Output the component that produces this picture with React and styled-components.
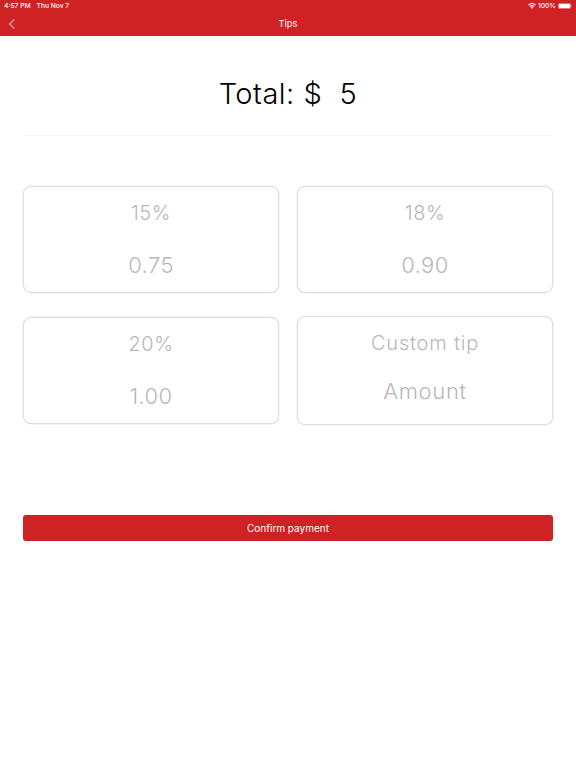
import React, { useState } from "react";
import styled, { createGlobalStyle } from "styled-components";

const GlobalStyle = createGlobalStyle`
    * {
        box-sizing: border-box;
    }

    body {
        margin: 0;
        background: #fff;
        font-family: Inter, "Liberation Sans", sans-serif;
    }
`;

const Header = styled.header`
    height: 36px;
    color: #fff;
    background: #cf2224;
`;

const StatusBar = styled.div`
    display: flex;
    align-items: center;
    justify-content: space-between;
    height: 12px;
    padding: 0 4px;
    font-size: 6.7px;
    font-weight: 500;
    line-height: 12px;
    white-space: pre;
`;

const StatusGroup = styled.div`
    display: flex;
    align-items: center;
    gap: ${props => props.$gap}px;
`;

const NavBar = styled.div`
    display: grid;
    grid-template-columns: 24px 1fr 24px;
    align-items: center;
    height: 24px;
`;

const BackButton = styled.button`
    display: flex;
    padding: 0 0 0 8px;
    border: 0;
    color: inherit;
    background: none;
`;

const Title = styled.h1`
    margin: 0;
    font-size: 9.4px;
    font-weight: 400;
    line-height: 24px;
    text-align: center;
`;

const Content = styled.main`
    padding: 0 23px;
`;

const Total = styled.div`
    height: 100px;
    padding-top: 38px;
    border-bottom: 1px solid #f3f3f3;
    color: #000;
    font-size: 29px;
    font-weight: 300;
    line-height: 40px;
    letter-spacing: 0.5px;
    text-align: center;
    white-space: pre;
`;

const TipGrid = styled.div`
    display: grid;
    grid-template-columns: 1fr 1fr;
    gap: 23px 18px;
    align-items: center;
    padding: 50px 0 90px;
`;

const TipCard = styled.button`
    display: flex;
    flex-direction: column;
    align-items: center;
    gap: ${props => (props.$custom ? 20 : 24)}px;
    height: ${props => (props.$custom ? 109 : 107)}px;
    padding: ${props => (props.$custom ? 12 : 11.5)}px 0 0;
    border: 1px solid #dcdce5;
    border-radius: 8px;
    box-shadow: 0 0 0 0.5px #ececf2;
    color: #b8b8b8;
    background: #fff;
    font-family: inherit;
    font-weight: 300;
    line-height: 28px;
`;

const TipLabel = styled.span`
    font-size: 20px;
    letter-spacing: ${props => props.$spacing}px;
`;

const TipValue = styled.span`
    font-size: 22px;
    letter-spacing: ${props => props.$spacing}px;
`;

const ConfirmButton = styled.button`
    display: block;
    width: 100%;
    height: 26px;
    padding: 0;
    border: 0;
    border-radius: 3px;
    color: #fff;
    background: #cf2224;
    font-family: inherit;
    font-size: 10px;
    font-weight: 400;
    line-height: 25px;
`;

const tips = [
    { label: "15%", value: "0.75" },
    { label: "18%", value: "0.90" },
    { label: "20%", value: "1.00" },
    { label: "Custom tip", value: "Amount", custom: true },
];

const WifiIcon = () => (
    <svg width="8" height="6" viewBox="0 0 16 12" fill="none" stroke="currentColor" strokeWidth="2.4">
        <path d="M1 4.200c4-3.800 10-3.800 14 0" />
        <path d="M3.600 7.100c2.600-2.400 6.200-2.400 8.800 0" />
        <path d="M5.600 9l2.400 2.600L10.400 9c-1.400-1.200-3.400-1.200-4.800 0z" fill="currentColor" stroke="none" />
    </svg>
);

const BatteryIcon = () => (
    <svg width="14" height="6" viewBox="0 0 14 6">
        <rect x="0.25" y="0.25" width="12.5" height="5.5" rx="1.5" fill="none" stroke="#fff" strokeOpacity="0.5" strokeWidth="0.5" />
        <rect x="0.7" y="0.7" width="11.6" height="4.6" rx="1" fill="#fff" />
        <path d="M13.200 2v2c.8-.4.8-1.600 0-2z" fill="#fff" fillOpacity="0.6" />
    </svg>
);

const App = () => {
    const [selected, setSelected] = useState(null);

    return (
        <>
            <GlobalStyle />
            <Header>
                <StatusBar>
                    <StatusGroup $gap={6}>
                        <span>4:57 PM</span>
                        <span>Thu Nov 7</span>
                    </StatusGroup>
                    <StatusGroup $gap={2}>
                        <WifiIcon />
                        <span>100%</span>
                        <BatteryIcon />
                    </StatusGroup>
                </StatusBar>
                <NavBar>
                    <BackButton aria-label="Back">
                        <svg width="8" height="10" viewBox="0 0 8 10" fill="none" stroke="currentColor">
                            <path d="M6.300.5L1.600 5l4.700 4.500" />
                        </svg>
                    </BackButton>
                    <Title>Tips</Title>
                </NavBar>
            </Header>
            <Content>
                <Total>{"Total: $  5"}</Total>
                <TipGrid>
                    {tips.map(tip => (
                        <TipCard
                            key={tip.label}
                            $custom={tip.custom}
                            aria-pressed={selected === tip.label}
                            onClick={() => setSelected(tip.label)}
                        >
                            <TipLabel $spacing={tip.custom ? 0.8 : 0.5}>{tip.label}</TipLabel>
                            <TipValue $spacing={tip.custom ? 0.7 : 0.4}>{tip.value}</TipValue>
                        </TipCard>
                    ))}
                </TipGrid>
                <ConfirmButton>Confirm payment</ConfirmButton>
            </Content>
        </>
    );
};

export default App;
